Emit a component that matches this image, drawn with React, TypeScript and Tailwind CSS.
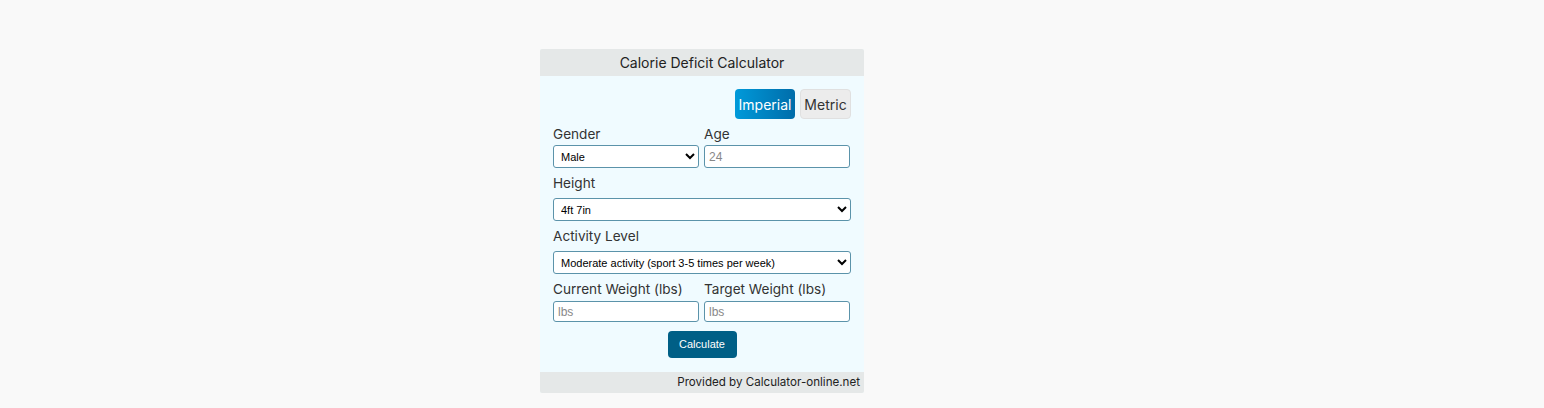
import React from "react";

export default function App() {
  const label = "block text-[13.6px] leading-5 text-[#333] font-['Inter',sans-serif]";
  const field =
    "block w-full h-[23px] rounded-[3px] border border-[#5b93aa] bg-white pl-[3px] pr-[2px] text-[11px] text-black font-['Liberation_Sans',Arial,sans-serif] outline-none";
  const input =
    "block w-full rounded-[3px] border border-[#5b93aa] bg-white px-[4px] text-[12px] text-black placeholder:text-[#888] font-['Liberation_Sans',Arial,sans-serif] outline-none";
  return (
    <div className="min-h-[408px] w-full bg-[#f9f9f9] pt-[49px] font-['Inter',sans-serif]">
      <div className="ml-[540px] w-[324px] rounded-[2px] bg-[#f0fbff] overflow-hidden">
        <div className="h-[27px] bg-[#e5e8e8] text-center text-[14px] leading-[27px] text-[#222]">
          Calorie Deficit Calculator
        </div>
        <div className="pl-[13px] pr-[13px] pt-[13px] pb-[14px]">
          <div className="flex justify-end gap-[5px]">
            <button className="h-[30px] w-[60px] rounded-[4px] bg-gradient-to-r from-[#009ada] to-[#006daa] text-[14px] text-white">
              Imperial
            </button>
            <button className="h-[30px] w-[51px] rounded-[4px] border border-[#e0e0e0] bg-[#ececec] text-[14px] text-[#333]">
              Metric
            </button>
          </div>
          <div className="mt-[5px] grid grid-cols-[146px_146px] gap-x-[5px]">
            <div>
              <span className={label}>Gender</span>
              <select className={field + " mt-px"} defaultValue="Male">
                <option>Male</option>
                <option>Female</option>
              </select>
            </div>
            <div>
              <span className={label}>Age</span>
              <input className={input + " mt-px h-[23px]"} placeholder="24" />
            </div>
          </div>
          <div className="mt-[5px]">
            <span className={label}>Height</span>
            <select className={field + " mt-[5px]"} defaultValue="4ft 7in">
              <option>4ft 7in</option>
            </select>
          </div>
          <div className="mt-[5px]">
            <span className={label}>Activity Level</span>
            <select className={field + " mt-[5px]"}>
              <option>Moderate activity (sport 3-5 times per week)</option>
            </select>
          </div>
          <div className="mt-[5px] grid grid-cols-[146px_146px] gap-x-[5px]">
            <div>
              <span className={label}>Current Weight (lbs)</span>
              <input className={input + " mt-[2px] h-[21px]"} placeholder="lbs" />
            </div>
            <div>
              <span className={label}>Target Weight (lbs)</span>
              <input className={input + " mt-[2px] h-[21px]"} placeholder="lbs" />
            </div>
          </div>
          <div className="mt-[9px] flex justify-center">
            <button className="h-[27px] w-[69px] rounded-[4px] bg-[#005f86] text-[11px] text-white font-['Liberation_Sans',Arial,sans-serif]">
              Calculate
            </button>
          </div>
        </div>
        <div className="h-[21px] bg-[#e5e8e8] pr-[4px] text-right text-[11.6px] leading-[21px] text-[#222]">
          Provided by Calculator-online.net
        </div>
      </div>
    </div>
  );
}
